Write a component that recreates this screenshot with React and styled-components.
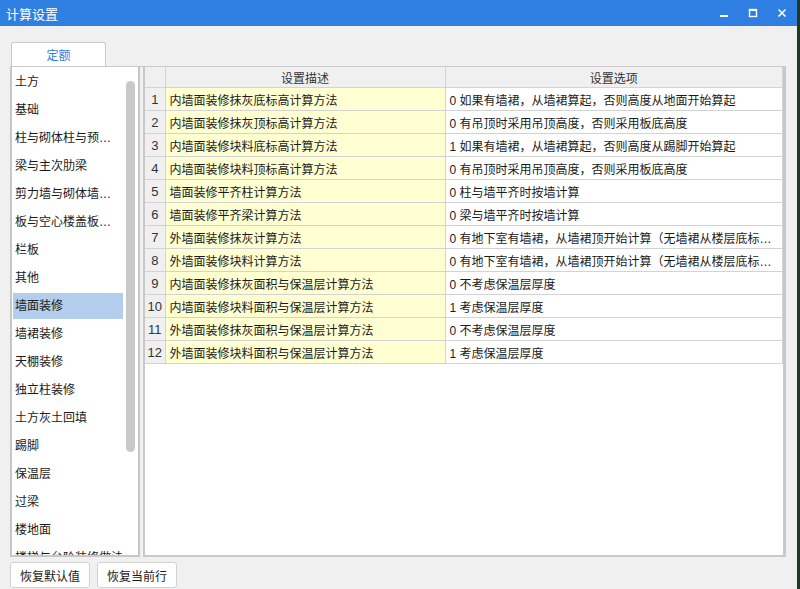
import React from "react";
import styled, { createGlobalStyle } from "styled-components";

const GlobalStyle = createGlobalStyle`
  html, body {
    margin: 0;
    padding: 0;
    background: #1f3a22;
  }
  body {
    font-family: "Liberation Sans", "Noto Sans CJK SC", sans-serif;
    font-size: 12px;
    color: #1a1a1a;
  }
`;

const categories = [
  "土方",
  "基础",
  "柱与砌体柱与预制柱与构造柱",
  "梁与主次肋梁",
  "剪力墙与砌体墙与保温墙",
  "板与空心楼盖板与楼梯",
  "栏板",
  "其他",
  "墙面装修",
  "墙裙装修",
  "天棚装修",
  "独立柱装修",
  "土方灰土回填",
  "踢脚",
  "保温层",
  "过梁",
  "楼地面",
  "楼梯与台阶装修做法",
];

const rows = [
  ["内墙面装修抹灰底标高计算方法", "0 如果有墙裙，从墙裙算起，否则高度从地面开始算起"],
  ["内墙面装修抹灰顶标高计算方法", "0 有吊顶时采用吊顶高度，否则采用板底高度"],
  ["内墙面装修块料底标高计算方法", "1 如果有墙裙，从墙裙算起，否则高度从踢脚开始算起"],
  ["内墙面装修块料顶标高计算方法", "0 有吊顶时采用吊顶高度，否则采用板底高度"],
  ["墙面装修平齐柱计算方法", "0 柱与墙平齐时按墙计算"],
  ["墙面装修平齐梁计算方法", "0 梁与墙平齐时按墙计算"],
  ["外墙面装修抹灰计算方法", "0 有地下室有墙裙，从墙裙顶开始计算（无墙裙从楼层底标高开始计算）"],
  ["外墙面装修块料计算方法", "0 有地下室有墙裙，从墙裙顶开始计算（无墙裙从楼层底标高开始计算）"],
  ["内墙面装修抹灰面积与保温层计算方法", "0 不考虑保温层厚度"],
  ["内墙面装修块料面积与保温层计算方法", "1 考虑保温层厚度"],
  ["外墙面装修抹灰面积与保温层计算方法", "0 不考虑保温层厚度"],
  ["外墙面装修块料面积与保温层计算方法", "1 考虑保温层厚度"],
];

const App = () => {
  return (
    <>
      <GlobalStyle />
      <Window>
        <TitleBar>
          <Title>计算设置</Title>
          <Controls>
            <CtrlButton aria-label="minimize">
              <svg width="10" height="10" viewBox="0 0 10 10">
                <rect x="1" y="7" width="8" height="2" fill="#fff" />
              </svg>
            </CtrlButton>
            <CtrlButton aria-label="maximize">
              <svg width="10" height="10" viewBox="0 0 10 10">
                <rect x="1.5" y="1.5" width="7" height="7" fill="none" stroke="#fff" strokeWidth="1.4" />
                <rect x="1" y="1" width="8" height="2" fill="#fff" />
              </svg>
            </CtrlButton>
            <CtrlButton aria-label="close">
              <svg width="10" height="10" viewBox="0 0 10 10">
                <path d="M1.5 1.5 L8.5 8.5 M8.5 1.5 L1.5 8.5" stroke="#fff" strokeWidth="1.6" />
              </svg>
            </CtrlButton>
          </Controls>
        </TitleBar>

        <Body>
          <TabRow>
            <Tab>定额</Tab>
          </TabRow>
          <Pane>
            <ListPanel>
              <List>
                {categories.map((c) => (
                  <ListItem key={c} $active={c === "墙面装修"}>
                    {c}
                  </ListItem>
                ))}
              </List>
              <ScrollTrack>
                <ScrollThumb />
              </ScrollTrack>
            </ListPanel>

            <TablePanel>
              <Grid>
                <colgroup>
                  <col style={{ width: 20 }} />
                  <col style={{ width: 280 }} />
                  <col />
                </colgroup>
                <thead>
                  <tr>
                    <HeadCell />
                    <HeadCell>设置描述</HeadCell>
                    <HeadCell>设置选项</HeadCell>
                  </tr>
                </thead>
                <tbody>
                  {rows.map(([desc, opt], i) => (
                    <tr key={i}>
                      <NumCell>{i + 1}</NumCell>
                      <DescCell>{desc}</DescCell>
                      <OptCell>{opt}</OptCell>
                    </tr>
                  ))}
                </tbody>
              </Grid>
            </TablePanel>
          </Pane>

          <ButtonRow>
            <Button>恢复默认值</Button>
            <Button>恢复当前行</Button>
          </ButtonRow>
        </Body>
      </Window>
    </>
  );
};

const Window = styled.div`
  width: 797px;
  height: 589px;
  background: #f0f0f0;
  display: flex;
  flex-direction: column;
  overflow: hidden;
`;

const TitleBar = styled.div`
  height: 26px;
  background: #2e7fe1;
  display: flex;
  align-items: center;
  justify-content: space-between;
  padding: 0 6px;
`;

const Title = styled.div`
  color: #fff;
  font-size: 13px;
`;

const Controls = styled.div`
  display: flex;
  gap: 19px;
  padding-right: 4px;
`;

const CtrlButton = styled.div`
  width: 10px;
  height: 10px;
  display: flex;
`;

const Body = styled.div`
  flex: 1;
  display: flex;
  flex-direction: column;
  padding: 16px 10px 0 10px;
`;

const TabRow = styled.div`
  display: flex;
  padding-left: 1px;
`;

const Tab = styled.div`
  width: 93px;
  height: 23px;
  background: #fff;
  border: 1px solid #c8c8c8;
  border-bottom: none;
  border-radius: 3px 3px 0 0;
  color: #2e7fe1;
  display: flex;
  align-items: center;
  justify-content: center;
`;

const Pane = styled.div`
  height: 490px;
  display: flex;
  gap: 3px;
  border-top: 1px solid #cacaca;
  width: 776px;
`;

const ListPanel = styled.div`
  position: relative;
  width: 126px;
  background: #fff;
  border: 2px solid #c6c6c6;
  border-top: none;
  overflow: hidden;
`;

const List = styled.div`
  padding: 2px 15px 0 1px;
  display: flex;
  flex-direction: column;
  gap: 2px;
`;

const ListItem = styled.div`
  height: 26px;
  line-height: 26px;
  padding-left: 2px;
  white-space: nowrap;
  overflow: hidden;
  text-overflow: ellipsis;
  background: ${(p) => (p.$active ? "#b3cdec" : "transparent")};
`;

const ScrollTrack = styled.div`
  position: absolute;
  top: 14px;
  right: 3px;
  width: 9px;
  height: 371px;
`;

const ScrollThumb = styled.div`
  width: 100%;
  height: 100%;
  border-radius: 5px;
  background: #c8c8c8;
`;

const TablePanel = styled.div`
  flex: 1;
  background: #fff;
  border: 2px solid #c8c8c8;
  border-top: none;
  border-right-width: 3px;
`;

const Grid = styled.table`
  width: 100%;
  table-layout: fixed;
  border-collapse: collapse;
  font-size: 12px;
`;

const HeadCell = styled.th`
  height: 20px;
  padding: 0;
  background: #f0f0f0;
  border: 1px solid #d3d3d3;
  border-top: none;
  font-weight: normal;
  color: #333;
  text-align: center;
  &:first-child {
    border-left: none;
  }
`;

const BaseCell = styled.td`
  height: 22px;
  padding: 0 4px;
  border: 1px solid #d3d3d3;
  white-space: nowrap;
  overflow: hidden;
  text-overflow: ellipsis;
`;

const NumCell = styled(BaseCell)`
  padding: 0;
  text-align: center;
  background: #f0f0f0;
  border-left: none;
  color: #333;
  font-size: 13px;
`;

const DescCell = styled(BaseCell)`
  background: #ffffd2;
`;

const OptCell = styled(BaseCell)`
  background: #fff;
`;

const ButtonRow = styled.div`
  display: flex;
  gap: 7px;
  margin-top: 5px;
`;

const Button = styled.div`
  height: 24px;
  padding: 0 9px;
  background: #fff;
  border: 1px solid #d2d2d2;
  border-radius: 3px;
  display: flex;
  align-items: center;
`;

export default App;
